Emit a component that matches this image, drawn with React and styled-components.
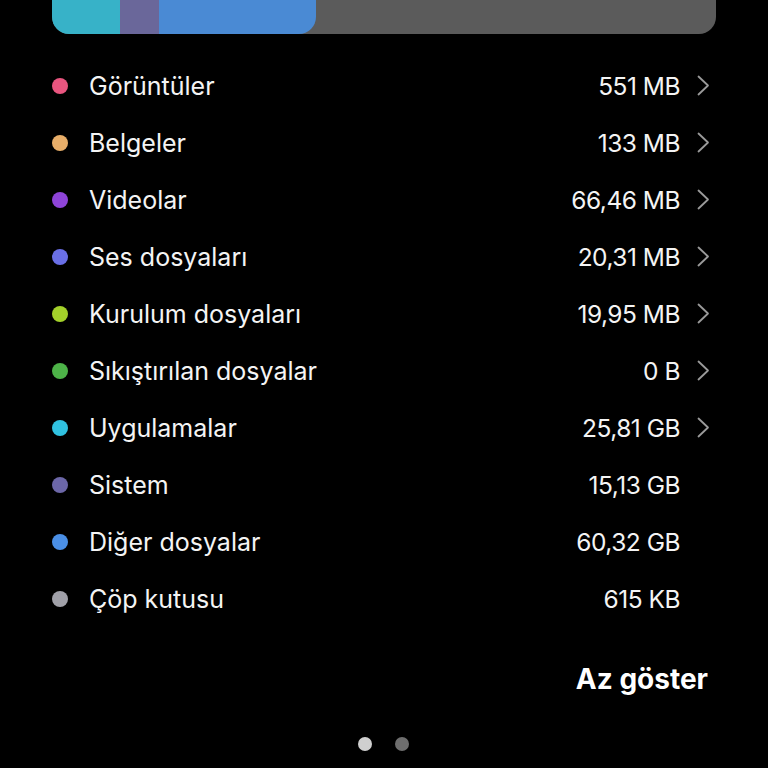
import React from "react";
import styled, { createGlobalStyle } from "styled-components";

const Global = createGlobalStyle`
  html, body { margin: 0; padding: 0; background: #000; }
  body { font-family: Inter, Roboto, "Noto Sans", sans-serif; color: #f4f4f4; overflow: hidden; }
`;

const Page = styled.div`
  width: 768px;
  height: 768px;
  background: #000;
  padding: 0 52px;
  box-sizing: border-box;
  display: flex;
  flex-direction: column;
  overflow: hidden;
`;

const Bar = styled.div`
  margin-top: -16px;
  height: 50px;
  border-radius: 17px;
  background: #5b5b5b;
  overflow: hidden;
  display: flex;
  flex-shrink: 0;
`;

const Fill = styled.div`
  display: flex;
  height: 100%;
  border-radius: 0 17px 17px 0;
  overflow: hidden;
`;

const Seg = styled.div`
  height: 100%;
  width: ${(p) => p.$w}px;
  background: ${(p) => p.$c};
`;

const List = styled.div`
  margin-top: 23px;
  display: flex;
  flex-direction: column;
`;

const Row = styled.div`
  height: 57px;
  display: flex;
  align-items: center;
`;

const Dot = styled.span`
  width: 16px;
  height: 16px;
  border-radius: 50%;
  background: ${(p) => p.$c};
  flex-shrink: 0;
  margin-right: 21px;
`;

const Label = styled.span`
  flex: 1;
  font-size: 25px;
`;

const Value = styled.span`
  font-size: 24.5px;
  letter-spacing: -0.5px;
`;

const ChevBox = styled.span`
  width: 19px;
  margin-left: 17px;
  display: flex;
  align-items: center;
  justify-content: flex-start;
  flex-shrink: 0;
`;

const Footer = styled.div`
  display: flex;
  justify-content: flex-end;
  margin-top: 35px;
  padding-right: 8px;
`;

const Less = styled.span`
  font-size: 28px;
  font-weight: 700;
  color: #fff;
`;

const Pager = styled.div`
  display: flex;
  justify-content: center;
  gap: 23px;
  margin-top: 41px;
  padding-right: 2px;
`;

const PageDot = styled.span`
  width: 14px;
  height: 14px;
  border-radius: 50%;
  background: ${(p) => (p.$active ? "#cfcfcf" : "#6e6e6e")};
`;

const items = [
  { c: "#e9557f", l: "Görüntüler", v: "551 MB", ch: true },
  { c: "#e8ae69", l: "Belgeler", v: "133 MB", ch: true },
  { c: "#8e44d8", l: "Videolar", v: "66,46 MB", ch: true },
  { c: "#6a6fe6", l: "Ses dosyaları", v: "20,31 MB", ch: true },
  { c: "#a3d12a", l: "Kurulum dosyaları", v: "19,95 MB", ch: true },
  { c: "#4db348", l: "Sıkıştırılan dosyalar", v: "0 B", ch: true },
  { c: "#30c1e0", l: "Uygulamalar", v: "25,81 GB", ch: true },
  { c: "#6c67a8", l: "Sistem", v: "15,13 GB", ch: false },
  { c: "#4a8fe6", l: "Diğer dosyalar", v: "60,32 GB", ch: false },
  { c: "#a0a0a8", l: "Çöp kutusu", v: "615 KB", ch: false },
];

const Chevron = () => (
  <svg width="13" height="21" viewBox="0 0 13 21" fill="none">
    <path d="M1.5 1.5 L11 10.5 L1.5 19.5" stroke="#9a9a9a" strokeWidth="1.8" strokeLinecap="round" strokeLinejoin="round" />
  </svg>
);

export default function App() {
  return (
    <>
      <Global />
      <Page>
        <Bar>
          <Fill>
            <Seg $w={68} $c="#37b2c8" />
            <Seg $w={39} $c="#6a679a" />
            <Seg $w={157} $c="#4a8ad4" />
          </Fill>
        </Bar>
        <List>
          {items.map((it) => (
            <Row key={it.l}>
              <Dot $c={it.c} />
              <Label>{it.l}</Label>
              <Value>{it.v}</Value>
              <ChevBox>{it.ch && <Chevron />}</ChevBox>
            </Row>
          ))}
        </List>
        <Footer>
          <Less>Az göster</Less>
        </Footer>
        <Pager>
          <PageDot $active />
          <PageDot />
        </Pager>
      </Page>
    </>
  );
}
